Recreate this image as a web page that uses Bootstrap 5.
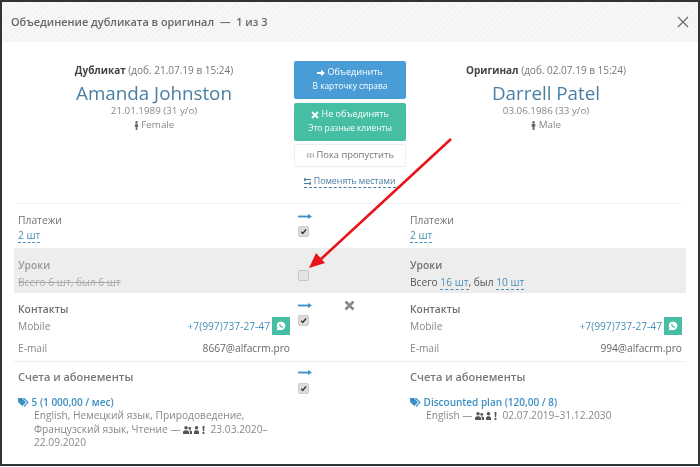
<!DOCTYPE html>
<html lang="ru">
<head>
<meta charset="utf-8">
<title>Объединение дубликата</title>
<link href="https://cdn.jsdelivr.net/npm/bootstrap@5.3.0/dist/css/bootstrap.min.css" rel="stylesheet">
<style>
html,body{height:467px;overflow:hidden;background:#fff}
body{font-family:"Open Sans","Noto Sans",sans-serif;font-size:10.2px;color:#777;line-height:14px}
.frame{position:relative;height:466px;border:2px solid #333;background:#fff;filter:blur(.55px);overflow:hidden}
.mhead{height:40px;padding:0 9px;background:repeating-linear-gradient(135deg,#f8f8f8 0 2px,#f3f3f3 2px 4px);color:#666;font-size:10.9px;font-weight:600}
.tri{display:grid;grid-template-columns:272px 120px 272px}
.mbody{padding:0 16px}
.top{height:162px;padding-top:21px;border-bottom:1px solid #f0f0f0}
.who{text-align:center;color:#777;font-size:10px;line-height:14px}
.who b{color:#444;font-weight:700}
.pname{font-size:18.8px;line-height:22px;color:#4a7ea3;margin-top:5px}
.sub{line-height:14px;color:#888;font-size:9.8px}
.acts{display:flex;flex-direction:column;align-items:center;margin-top:-2px}
.bact{width:112px;border-radius:2px;border:0;font-size:9px;line-height:14px;color:#fff;padding:4px 0;display:block;text-align:center}
.bact span{display:block;font-size:8.4px;line-height:14px}
.bblue{height:38px;background:#4a9cd6}
.bgreen{height:38px;background:#45bea3;margin-top:4px}
.bwhite{height:23px;background:#fff;border:1px solid #eee;color:#777;margin-top:3px;padding:3px 0;font-size:9.4px}
.swap{margin-top:8px;color:#4a7ea3;font-size:8.8px;border-bottom:1px dashed #4a7ea3;line-height:12px}
.rowx{margin:0 -4px;padding:0 4px}
.r1{height:44px;padding-top:9px}
.r2{height:45px;padding-top:10px;background:#ededed}
.r3{height:69px;padding-top:9px;border-bottom:1px solid #eee}
.r4{padding-top:7px}
.lbl{font-size:10.3px;color:#707070;line-height:14px;font-weight:600}
.lbl.plain{font-weight:500}
.r3 .lbl{margin-bottom:-1px}
.big{font-size:11px;font-weight:600;color:#777;line-height:16px}
.dash{color:#4a90b8;border-bottom:1px dashed #4a90b8}
.struck{color:#aaa;text-decoration:line-through;margin-top:3px;line-height:14px;font-size:10.2px}
.lbl.faded{color:#999}
.val{margin-top:1px;line-height:14px;color:#555}
.val.lesson{margin-top:3px}
.kv{height:22px;color:#888;align-items:center}
.kv .tel{color:#4a90b8}
.kv .mail{color:#666}
.wa{width:18px;height:18px;background:#45bea3;margin-left:2px}
.mid{padding-left:8px}
.mid .arr{display:block;margin-bottom:1px}
.form-check-input.chk{width:11px;height:11px;margin:6px 0 0;display:block;border:1px solid #c6c6c6;border-radius:2px;background-color:#e4e4e4;opacity:1;box-shadow:none}
.form-check-input.chk:checked{background-color:#dcdcdc;border-color:#ccc;background-size:100%;background-image:url("data:image/svg+xml,%3Csvg xmlns='http://www.w3.org/2000/svg' viewBox='0 0 12 12'%3E%3Cpath d='M3 6.2 5 8.5 9.5 3.2' fill='none' stroke='%23333' stroke-width='1.9'/%3E%3C/svg%3E")}
.mid.unset{padding-top:12px}
.mid.unset .chk{margin-top:0}
.r4 .mid .chk{margin-top:7px}
.xmark{position:absolute;left:342px;top:298px}
.plan{color:#3b8fc4;font-weight:600;font-size:10px;margin-top:10px;line-height:14px}
.plan svg{vertical-align:-1px}
.pdesc{padding-left:16px;color:#888;font-size:10.2px;line-height:13.5px}
.pdesc svg{vertical-align:-1px}
.pointer{position:absolute;left:0;top:0;pointer-events:none}
</style>
</head>
<body>
<div class="frame">
  <div class="mhead d-flex align-items-center justify-content-between">
    <span>Объединение дубликата в оригинал&nbsp; —&nbsp; 1 из 3</span>
    <svg width="12" height="12" viewBox="0 0 12 12"><path d="M1 1 11 11M11 1 1 11" stroke="#666" stroke-width="1.1"/></svg>
  </div>
  <div class="mbody">
    <div class="tri top">
      <div class="who">
        <div><b>Дубликат</b> (доб. 21.07.19 в 15:24)</div>
        <div class="pname">Amanda Johnston</div>
        <div class="sub">21.01.1989 (31 y/o)</div>
        <div class="sub"><svg width="5" height="9" viewBox="0 0 5 9"><circle cx="2.5" cy="1.2" r="1.2" fill="#666"/><path d="M1.5 2.8h2l1 3H3.3V9H1.7V5.8H.5z" fill="#666"/></svg> Female</div>
      </div>
      <div class="acts">
        <div class="bact bblue"><svg width="8" height="8" viewBox="0 0 8 8"><path d="M0 3h4V.7L8 4 4 7.3V5H0z" fill="#fff"/></svg> Объединить<span>В карточку справа</span></div>
        <div class="bact bgreen"><svg width="8" height="8" viewBox="0 0 8 8"><path d="M1 1 7 7M7 1 1 7" stroke="#fff" stroke-width="1.8"/></svg> Не объединять<span>Это разные клиенты</span></div>
        <div class="bact bwhite"><svg width="8" height="7" viewBox="0 0 8 7"><path d="M.5 1v5M1.5 3.5 3.5 1v5zM4.5 3.5 6.5 1v5z" fill="none" stroke="#bbb" transform="matrix(-1 0 0 1 8 0)"/></svg> Пока пропустить</div>
        <div class="swap"><svg width="7" height="7" viewBox="0 0 7 7"><path d="M0 1.5h7M0 5.5h7M1.5 0 0 1.5 1.5 3M5.5 4 7 5.5 5.5 7" fill="none" stroke="#4a7ea3" stroke-width="1.1"/></svg> Поменять местами</div>
      </div>
      <div class="who">
        <div><b>Оригинал</b> (доб. 02.07.19 в 15:24)</div>
        <div class="pname">Darrell Patel</div>
        <div class="sub">03.06.1986 (33 y/o)</div>
        <div class="sub"><svg width="5" height="9" viewBox="0 0 5 9"><circle cx="2.5" cy="1.2" r="1.2" fill="#666"/><path d="M.7 2.8h3.6v3H3.4V9H1.6V5.8H.7z" fill="#666"/></svg> Male</div>
      </div>
    </div>

    <div class="tri rowx r1">
      <div><div class="lbl plain">Платежи</div><div class="val"><span class="dash">2 шт</span></div></div>
      <div class="mid"><svg class="arr" width="14" height="7" viewBox="0 0 14 7"><path d="M0 3.5h10" stroke="#3b8fc4" stroke-width="1.8"/><path d="M10 1l4 2.5-4 2.5z" fill="#3b8fc4"/></svg><input class="form-check-input chk" type="checkbox" checked aria-label="Платежи"></div>
      <div><div class="lbl plain">Платежи</div><div class="val"><span class="dash">2 шт</span></div></div>
    </div>
    <div class="tri rowx r2">
      <div><div class="lbl faded">Уроки</div><div class="struck">Всего 6 шт, был 6 шт</div></div>
      <div class="mid unset"><input class="form-check-input chk" type="checkbox" aria-label="Уроки"></div>
      <div><div class="lbl">Уроки</div><div class="val lesson">Всего <span class="dash">16 шт</span>, был <span class="dash">10 шт</span></div></div>
    </div>
    <div class="tri rowx r3">
      <div>
        <div class="lbl">Контакты</div>
        <div class="d-flex kv justify-content-between"><span>Mobile</span><span class="d-flex align-items-center"><span class="tel">+7(997)737-27-47</span><span class="wa d-flex align-items-center justify-content-center"><svg width="10" height="10" viewBox="0 0 10 10"><path d="M5 .5a4.3 4.3 0 0 0-3.7 6.4L.6 9.4l2.6-.7A4.3 4.3 0 1 0 5 .5z" fill="#fff"/><path d="M3.4 3c.6 2 1.5 2.9 3.4 3.5" stroke="#45bea3" stroke-width="1.1" fill="none"/></svg></span></span></div>
        <div class="d-flex kv justify-content-between"><span>E-mail</span><span class="mail">8667@alfacrm.pro</span></div>
      </div>
      <div class="mid"><svg class="arr" width="14" height="7" viewBox="0 0 14 7"><path d="M0 3.5h10" stroke="#3b8fc4" stroke-width="1.8"/><path d="M10 1l4 2.5-4 2.5z" fill="#3b8fc4"/></svg><input class="form-check-input chk" type="checkbox" checked aria-label="Контакты"></div>
      <div>
        <div class="lbl">Контакты</div>
        <div class="d-flex kv justify-content-between"><span>Mobile</span><span class="d-flex align-items-center"><span class="tel">+7(997)737-27-47</span><span class="wa d-flex align-items-center justify-content-center"><svg width="10" height="10" viewBox="0 0 10 10"><path d="M5 .5a4.3 4.3 0 0 0-3.7 6.4L.6 9.4l2.6-.7A4.3 4.3 0 1 0 5 .5z" fill="#fff"/><path d="M3.4 3c.6 2 1.5 2.9 3.4 3.5" stroke="#45bea3" stroke-width="1.1" fill="none"/></svg></span></span></div>
        <div class="d-flex kv justify-content-between"><span>E-mail</span><span class="mail">994@alfacrm.pro</span></div>
      </div>
    </div>
    <div class="tri rowx r4">
      <div>
        <div class="big">Счета и абонементы</div>
        <div class="plan"><svg width="11" height="9" viewBox="0 0 11 9"><path d="M0 0h4l4 4.2L4.2 8 0 4z" fill="#3b8fc4"/><path d="M5.5 0 10 4.3 6 8.5" fill="none" stroke="#3b8fc4" stroke-width="1.1"/></svg> 5 (1 000,00 / мес)</div>
        <div class="pdesc">English, Немецкий язык, Природоведение, Французский язык, Чтение — <svg width="22" height="8" viewBox="0 0 22 8"><path d="M3 0a1.6 1.6 0 1 1 0 3.5A1.6 1.6 0 0 1 3 0zM0 8V5.5L2 4.2h2L6 5.5V8zM6.7 1a1.3 1.3 0 1 1 0 2.8A1.3 1.3 0 0 1 6.7 1zM6.8 8V5.3L6 4.4h2l1 1V8zM13.5 0a1.7 1.7 0 1 1 0 3.6 1.7 1.7 0 0 1 0-3.6zM11 8V5.6l1.5-1.4h2L16 5.6V8zM19.5 0h2l-.4 5.3h-1.2zM19.6 6h1.8v2h-1.8z" fill="#555"/></svg>&nbsp; 23.03.2020–22.09.2020</div>
      </div>
      <div class="mid"><svg class="arr" width="14" height="7" viewBox="0 0 14 7"><path d="M0 3.5h10" stroke="#3b8fc4" stroke-width="1.8"/><path d="M10 1l4 2.5-4 2.5z" fill="#3b8fc4"/></svg><input class="form-check-input chk" type="checkbox" checked aria-label="Счета"></div>
      <div>
        <div class="big">Счета и абонементы</div>
        <div class="plan"><svg width="11" height="9" viewBox="0 0 11 9"><path d="M0 0h4l4 4.2L4.2 8 0 4z" fill="#3b8fc4"/><path d="M5.5 0 10 4.3 6 8.5" fill="none" stroke="#3b8fc4" stroke-width="1.1"/></svg> Discounted plan (120,00 / 8)</div>
        <div class="pdesc">English — <svg width="22" height="8" viewBox="0 0 22 8"><path d="M3 0a1.6 1.6 0 1 1 0 3.5A1.6 1.6 0 0 1 3 0zM0 8V5.5L2 4.2h2L6 5.5V8zM6.7 1a1.3 1.3 0 1 1 0 2.8A1.3 1.3 0 0 1 6.7 1zM6.8 8V5.3L6 4.4h2l1 1V8zM13.5 0a1.7 1.7 0 1 1 0 3.6 1.7 1.7 0 0 1 0-3.6zM11 8V5.6l1.5-1.4h2L16 5.6V8zM19.5 0h2l-.4 5.3h-1.2zM19.6 6h1.8v2h-1.8z" fill="#555"/></svg>&nbsp; 02.07.2019–31.12.2030</div>
      </div>
    </div>
  </div>
  <svg class="xmark" width="11" height="11" viewBox="0 0 11 11"><path d="M1.5 1.5 9.5 9.5M9.5 1.5 1.5 9.5" stroke="#888" stroke-width="2.6"/></svg>
  <svg class="pointer" width="696" height="462" viewBox="0 0 696 462"><path d="M449 137 318 258" stroke="#e8141c" stroke-width="2.6"/><path d="M307 266 314 251 323 261z" fill="#e8141c"/></svg>
</div>
</body>
</html>
